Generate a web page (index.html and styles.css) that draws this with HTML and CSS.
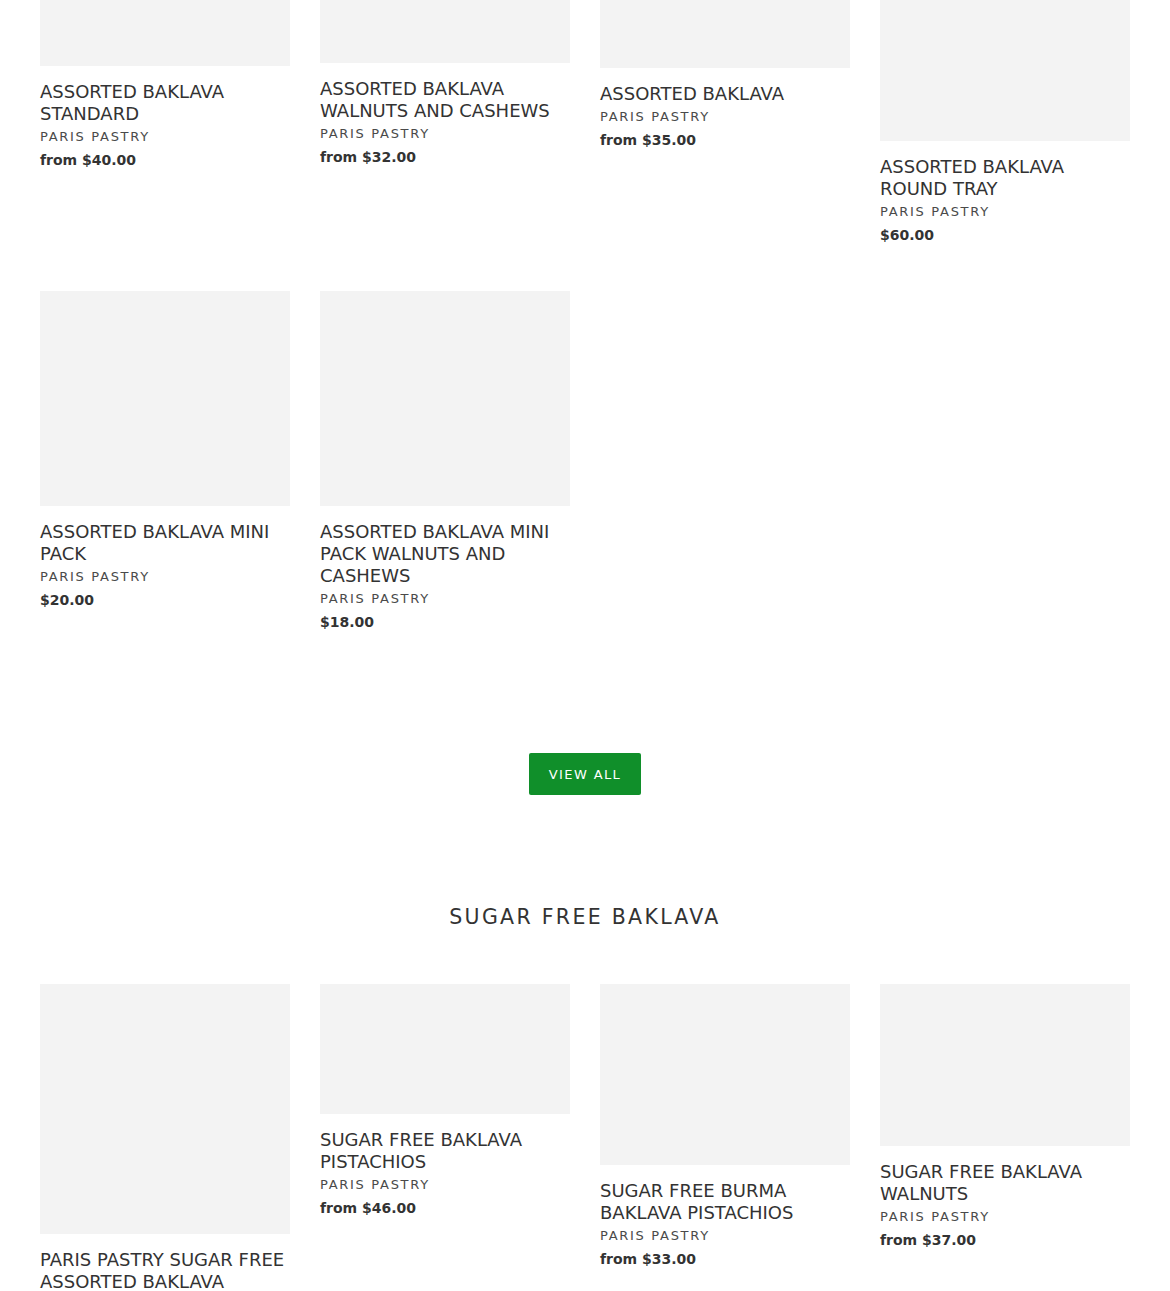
FILE: index.html
```html
<!DOCTYPE html>
<html lang="en">
<head>
    <meta charset="UTF-8">
    <meta name="viewport" content="width=device-width, initial-scale=1.0">
    <title>Paris Pastry - Baklava</title>
    <link rel="stylesheet" href="styles.css">
</head>
<body>

<div class="page">

    <!-- Assorted baklava (scrolled part) -->
    <div class="collection collection-top">
        <div class="grid">
            <a href="#" class="card">
                <div class="card-img" style="height:175px"></div>
                <div class="card-title">Assorted Baklava Standard</div>
                <div class="card-vendor">Paris Pastry</div>
                <div class="card-price">from $40.00</div>
            </a>
            <a href="#" class="card">
                <div class="card-img" style="height:172px"></div>
                <div class="card-title">Assorted Baklava Walnuts and Cashews</div>
                <div class="card-vendor">Paris Pastry</div>
                <div class="card-price">from $32.00</div>
            </a>
            <a href="#" class="card">
                <div class="card-img" style="height:177px"></div>
                <div class="card-title">Assorted Baklava</div>
                <div class="card-vendor">Paris Pastry</div>
                <div class="card-price">from $35.00</div>
            </a>
            <a href="#" class="card">
                <div class="card-img" style="height:250px"></div>
                <div class="card-title">Assorted Baklava Round Tray</div>
                <div class="card-vendor">Paris Pastry</div>
                <div class="card-price">$60.00</div>
            </a>
            <a href="#" class="card">
                <div class="card-img" style="height:215px"></div>
                <div class="card-title">Assorted Baklava Mini Pack</div>
                <div class="card-vendor">Paris Pastry</div>
                <div class="card-price">$20.00</div>
            </a>
            <a href="#" class="card">
                <div class="card-img" style="height:215px"></div>
                <div class="card-title">Assorted Baklava Mini Pack Walnuts and Cashews</div>
                <div class="card-vendor">Paris Pastry</div>
                <div class="card-price">$18.00</div>
            </a>
        </div>

        <div class="view-all">
            <a href="#" class="btn">View all</a>
        </div>
    </div>

    <!-- Sugar free -->
    <div class="collection">
        <h2 class="section-title">Sugar Free Baklava</h2>
        <div class="grid">
            <a href="#" class="card">
                <div class="card-img" style="height:250px"></div>
                <div class="card-title">Paris Pastry Sugar Free Assorted Baklava</div>
                <div class="card-vendor">Paris Pastry</div>
                <div class="card-price">from $30.00</div>
            </a>
            <a href="#" class="card">
                <div class="card-img" style="height:130px"></div>
                <div class="card-title">Sugar Free Baklava Pistachios</div>
                <div class="card-vendor">Paris Pastry</div>
                <div class="card-price">from $46.00</div>
            </a>
            <a href="#" class="card">
                <div class="card-img" style="height:181px"></div>
                <div class="card-title">Sugar Free Burma Baklava Pistachios</div>
                <div class="card-vendor">Paris Pastry</div>
                <div class="card-price">from $33.00</div>
            </a>
            <a href="#" class="card">
                <div class="card-img" style="height:162px"></div>
                <div class="card-title">Sugar Free Baklava Walnuts</div>
                <div class="card-vendor">Paris Pastry</div>
                <div class="card-price">from $37.00</div>
            </a>
        </div>
    </div>

</div>

</body>
</html>
```

FILE: styles.css
```css
body {
    margin: 0;
    background: #ffffff;
    color: #333333;
    font-family: "DejaVu Sans", "Liberation Sans", sans-serif;
}

.page {
    padding: 0 40px;
    overflow: hidden;
}

/* la page est deja defilee : le haut de la premiere rangee est cache */
.collection-top {
    margin-top: -109px;
}

.grid {
    display: grid;
    grid-template-columns: repeat(4, 250px);
    column-gap: 30px;
    row-gap: 45px;
    align-items: start;
}

.card {
    display: block;
    color: #333333;
    text-decoration: none;
}

.card-img {
    background-color: #f3f3f3;
}

.card-title {
    margin-top: 15px;
    font-size: 18px;
    line-height: 22px;
    text-transform: uppercase;
    color: #333333;
}

.card-vendor {
    margin-top: 2px;
    font-size: 13px;
    line-height: 20px;
    letter-spacing: 1.7px;
    text-transform: uppercase;
    color: #4a4a4a;
}

.card-price {
    margin-top: 2px;
    font-size: 14px;
    line-height: 22px;
    font-weight: bold;
    color: #333333;
}

.view-all {
    display: flex;
    justify-content: center;
    margin-top: 120px;
}

.btn {
    display: flex;
    align-items: center;
    justify-content: center;
    width: 112px;
    height: 42px;
    background-color: #108f2a;
    color: #ffffff;
    border-radius: 2px;
    font-size: 13px;
    letter-spacing: 1.4px;
    text-transform: uppercase;
    text-decoration: none;
}

.section-title {
    margin: 107px 0 52px;
    text-align: center;
    font-size: 20.5px;
    line-height: 30px;
    font-weight: normal;
    letter-spacing: 2.3px;
    text-transform: uppercase;
    color: #333333;
}
```
